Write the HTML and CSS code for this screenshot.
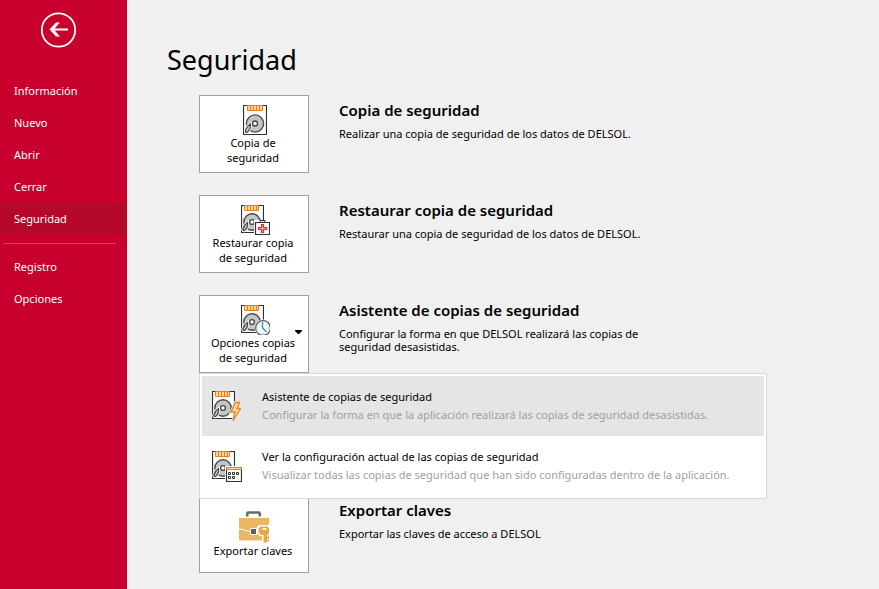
FILE: index.html
```html
<!DOCTYPE html>
<html lang="es">
<head>
<meta charset="utf-8">
<title>Seguridad</title>
<link rel="stylesheet" href="styles.css">
</head>
<body>
<svg class="sprite" aria-hidden="true">
  <symbol id="disk" viewBox="0 0 24 30">
    <path d="M.5 .5h23v29H.5z" fill="#fff" stroke="#303030" stroke-width="1.200"/>
    <path d="M4.500 .5h15v5h-15z" fill="#fbdc8f" stroke="#e87a28"/>
    <path d="M7.500 1v4M10.500 1v4M13.500 1v4M16.500 1v4" stroke="#e87a28"/>
    <circle cx="12" cy="18.500" r="8.600" fill="#c4c4c4" stroke="#4a4a4a" stroke-width="1.400"/>
    <circle cx="12" cy="18.500" r="2.500" fill="#fff" stroke="#4a4a4a" stroke-width="1.400"/>
    <path d="M7.500 18.800c.5 3-1 7-3.300 8.500-1.300.5-2.200-.6-1.700-2 .8-2.500 2.500-5 5-6.500z" fill="#c4c4c4" stroke="#fff" stroke-width="3"/>
    <path d="M7.500 18.800c.5 3-1 7-3.300 8.500-1.300.5-2.200-.6-1.700-2 .8-2.500 2.500-5 5-6.500z" fill="#c4c4c4" stroke="#4a4a4a" stroke-width="1.300"/>
  </symbol>
  <symbol id="disk-small" viewBox="0 0 23 28">
    <path d="M.5 .5h22v27H.5z" fill="#fff" stroke="#303030" stroke-width="1.200"/>
    <path d="M3.500 .5h14v5h-14z" fill="#fbdc8f" stroke="#e87a28"/>
    <path d="M6.500 1v4M9.500 1v4M12.500 1v4M15.500 1v4" stroke="#e87a28"/>
    <circle cx="11" cy="17" r="8.200" fill="#c4c4c4" stroke="#4a4a4a" stroke-width="1.400"/>
    <circle cx="11" cy="17" r="2.400" fill="#fff" stroke="#4a4a4a" stroke-width="1.400"/>
    <path d="M6.500 17.500c.5 3-1 6.500-3 8-1.300.5-2-.6-1.500-2 .8-2.300 2.200-4.500 4.500-6z" fill="#c4c4c4" stroke="#fff" stroke-width="3"/>
    <path d="M6.500 17.500c.5 3-1 6.500-3 8-1.300.5-2-.6-1.500-2 .8-2.300 2.200-4.500 4.500-6z" fill="#c4c4c4" stroke="#4a4a4a" stroke-width="1.300"/>
  </symbol>
</svg>
<div class="app">
  <aside class="sidebar">
    <button class="back" type="button" aria-label="Volver">
      <svg width="36" height="36" viewBox="0 0 36 36" fill="none" stroke="#fff">
        <circle cx="18.500" cy="18" r="16.700" stroke-width="1.800"/>
        <path d="M28 17.500H12" stroke-width="2"/>
        <path d="M9.500 17.500l6.500-7h4l-6.200 7 6.200 7h-4z" fill="#fff" stroke="none"/>
      </svg>
    </button>
    <nav class="nav">
      <a href="#">Información</a>
      <a href="#">Nuevo</a>
      <a href="#">Abrir</a>
      <a href="#">Cerrar</a>
      <a href="#" class="active" aria-current="page">Seguridad</a>
      <hr>
      <a href="#">Registro</a>
      <a href="#">Opciones</a>
    </nav>
  </aside>
  <main class="content">
    <h1>Seguridad</h1>
    <section class="row">
      <button class="tile" type="button">
        <svg class="icon" viewBox="0 0 32 32"><use href="#disk" x="5" y="2" width="24" height="30"/></svg>
        <span>Copia de seguridad</span>
      </button>
      <div class="info">
        <h2>Copia de seguridad</h2>
        <p>Realizar una copia de seguridad de los datos de DELSOL.</p>
      </div>
    </section>
    <section class="row">
      <button class="tile" type="button">
        <svg class="icon" viewBox="0 0 32 32">
          <use href="#disk-small" x="3" y="2" width="23" height="28"/>
          <path d="M16 17h16v15H16z" fill="#fff"/>
          <path d="M22 19v-1.500h5V19" fill="none" stroke="#303030"/>
          <path d="M17.500 19.500h14v12h-14z" fill="#fff" stroke="#303030" stroke-width="1.200"/>
          <path d="M23.500 21.500h2v3h3v2h-3v3h-2v-3h-3v-2h3z" fill="#f7b3b3" stroke="#dc2d37" stroke-width="1.200"/>
        </svg>
        <span>Restaurar copia de seguridad</span>
      </button>
      <div class="info">
        <h2>Restaurar copia de seguridad</h2>
        <p>Restaurar una copia de seguridad de los datos de DELSOL.</p>
      </div>
    </section>
    <section class="row">
      <button class="tile" type="button" aria-haspopup="menu" aria-expanded="true">
        <svg class="icon" viewBox="0 0 32 32">
          <use href="#disk-small" x="3" y="2" width="23" height="28"/>
          <circle cx="25" cy="25" r="8.500" fill="#fff"/>
          <circle cx="25" cy="25" r="7.400" fill="#fff" stroke="#5a5a5a" stroke-width="1.200"/>
          <path d="M25 19v1M25 30v1M19 25h1M30 25h1M20.800 20.800l.7.7M29.200 20.800l-.7.7M20.800 29.200l.7-.7" stroke="#999"/>
          <path d="M24.500 19.500V25l4 4" fill="none" stroke="#2492d8" stroke-width="1.400"/>
        </svg>
        <span>Opciones copias de seguridad</span>
        <svg class="caret" width="7" height="4" viewBox="0 0 7 4"><path d="M0 0h7v1L4 4H3L0 1z"/></svg>
      </button>
      <div class="info">
        <h2>Asistente de copias de seguridad</h2>
        <p>Configurar la forma en que DELSOL realizará las copias de seguridad desasistidas.</p>
      </div>
      <div class="menu" role="menu">
        <button class="item selected" type="button" role="menuitem">
          <svg class="icon" viewBox="0 0 32 32">
            <use href="#disk-small" x="3" y="1" width="23" height="28"/>
            <path d="M26.500 12.500h4l-2.500 6h4l-8 13 2-9h-4z" fill="#fbdc8f" stroke="#e5e5e5" stroke-width="3"/>
            <path d="M26.500 12.500h4l-2.500 6h3.500l-7.500 12.500 2-9h-4z" fill="#fbdc8f" stroke="#ee8030" stroke-width="1.300"/>
          </svg>
          <span class="text"><span>Asistente de copias de seguridad</span><small>Configurar la forma en que la aplicación realizará las copias de seguridad desasistidas.</small></span>
        </button>
        <button class="item" type="button" role="menuitem">
          <svg class="icon wide" viewBox="0 0 33 32">
            <use href="#disk-small" x="3" y="1" width="23" height="28"/>
            <path d="M16 16h17v16H16z" fill="#fff"/>
            <path d="M17.500 17.500h15v14h-15z" fill="#fff" stroke="#303030" stroke-width="1.200"/>
            <path d="M17.500 17.500h15v2h-15z" fill="#fbdc8f" stroke="#e87a28"/>
            <path d="M19.500 22.500h2v2h-2zM23.500 22.500h2v2h-2zM27.500 22.500h2v2h-2zM19.500 26.500h2v2h-2zM23.500 26.500h2v2h-2z" fill="none" stroke="#303030"/>
          </svg>
          <span class="text"><span>Ver la configuración actual de las copias de seguridad</span><small>Visualizar todas las copias de seguridad que han sido configuradas dentro de la aplicación.</small></span>
        </button>
      </div>
    </section>
    <section class="row last">
      <button class="tile" type="button">
        <svg class="icon" viewBox="0 0 32 32">
          <path d="M9.300 5.500V2.500q0-1 1-1h10.400q1 0 1 1v3" fill="none" stroke="#68686a" stroke-width="2.500"/>
          <path d="M1 7h30v22.500H1z" fill="#eab765"/>
          <path d="M1 17.500l11 3M19 20l12-3" stroke="#fff" fill="none"/>
          <path d="M12.500 17.500h6v6h-6z" fill="#5e6166" stroke="#fff"/>
          <path d="M22 14h8q2 0 2 2v6q0 2-2 2v9h-6v-8h-1q-4-1-4-4v-4q0-3 3-3z" fill="#fff"/>
          <path d="M22.500 15.500h7l1.500 1.500v5l-2 2v2h1.500v1.500H29v1.500h1.500V30.500H29l-1.500 1.500-2-1.500V24h-2.500l-2.500-2.500V17.500z" fill="#eaa740"/>
          <path d="M24.500 17h4v2h-4z" fill="#fff"/>
        </svg>
        <span>Exportar claves</span>
      </button>
      <div class="info">
        <h2>Exportar claves</h2>
        <p>Exportar las claves de acceso a DELSOL</p>
      </div>
    </section>
  </main>
</div>
</body>
</html>
```
FILE: styles.css
```css
* { box-sizing: border-box; }

body {
  margin: 0;
  background: #f0f0f0;
  color: #000;
  font: 11px/15px "Noto Sans", "Open Sans", sans-serif;
}

button {
  margin: 0;
  font: inherit;
  color: inherit;
  cursor: pointer;
}

.sprite { position: absolute; width: 0; height: 0; }

.app { display: flex; min-height: 100vh; }

.sidebar {
  flex: 0 0 127px;
  padding-top: 12px;
  background: #c8002d;
}

.back {
  display: block;
  width: 36px;
  height: 36px;
  margin-left: 40px;
  padding: 0;
  border: 0;
  border-radius: 50%;
  background: none;
}

.back svg { display: block; }

.nav { padding-top: 27px; }

.nav a {
  display: block;
  padding: 0 14px;
  line-height: 32px;
  color: #fff;
  text-decoration: none;
}

.nav .active { background: #b5082a; }

.nav hr {
  height: 1px;
  margin: 8px 11px 7px 3px;
  border: 0;
  background: #de3b5c;
}

.content { flex: 1; padding: 40px 40px 16px; }

h1 {
  margin: 0 0 15px;
  font-size: 27px;
  font-weight: 400;
  line-height: 40px;
}

.row {
  position: relative;
  display: flex;
  gap: 30px;
  margin: 0 0 22px 32px;
}

.row.last { margin: 122px 0 0 32px; }

.tile {
  position: relative;
  display: flex;
  flex: 0 0 110px;
  flex-direction: column;
  align-items: center;
  justify-content: center;
  height: 78px;
  padding: 0 10px 0 8px;
  border: 1px solid #a0a0a0;
  background: #fff;
  text-align: center;
}

.icon { flex: none; width: 32px; height: 32px; }
.tile .icon { margin-left: 2px; }
.icon.wide { width: 33px; margin-right: -1px; }

.caret { position: absolute; right: 6px; top: 34px; }

.info { max-width: 310px; padding-top: 4px; }

h2 {
  margin: 0 0 6px;
  font-size: 15px;
  font-weight: 600;
  line-height: 22px;
}

p { margin: 0; line-height: 13px; }

.menu {
  position: absolute;
  z-index: 1;
  top: 100%;
  left: 0;
  width: 568px;
  padding: 2px;
  border: 1px solid #d8d8d8;
  background: #fff;
}

.item {
  display: flex;
  align-items: center;
  gap: 21px;
  width: 100%;
  height: 60px;
  padding: 0 7px;
  border: 0;
  background: none;
  text-align: left;
}

.item.selected { background: #e5e5e5; }

.text { display: grid; line-height: 18px; }

small { font-size: 11px; color: #a0a0a0; }
```
